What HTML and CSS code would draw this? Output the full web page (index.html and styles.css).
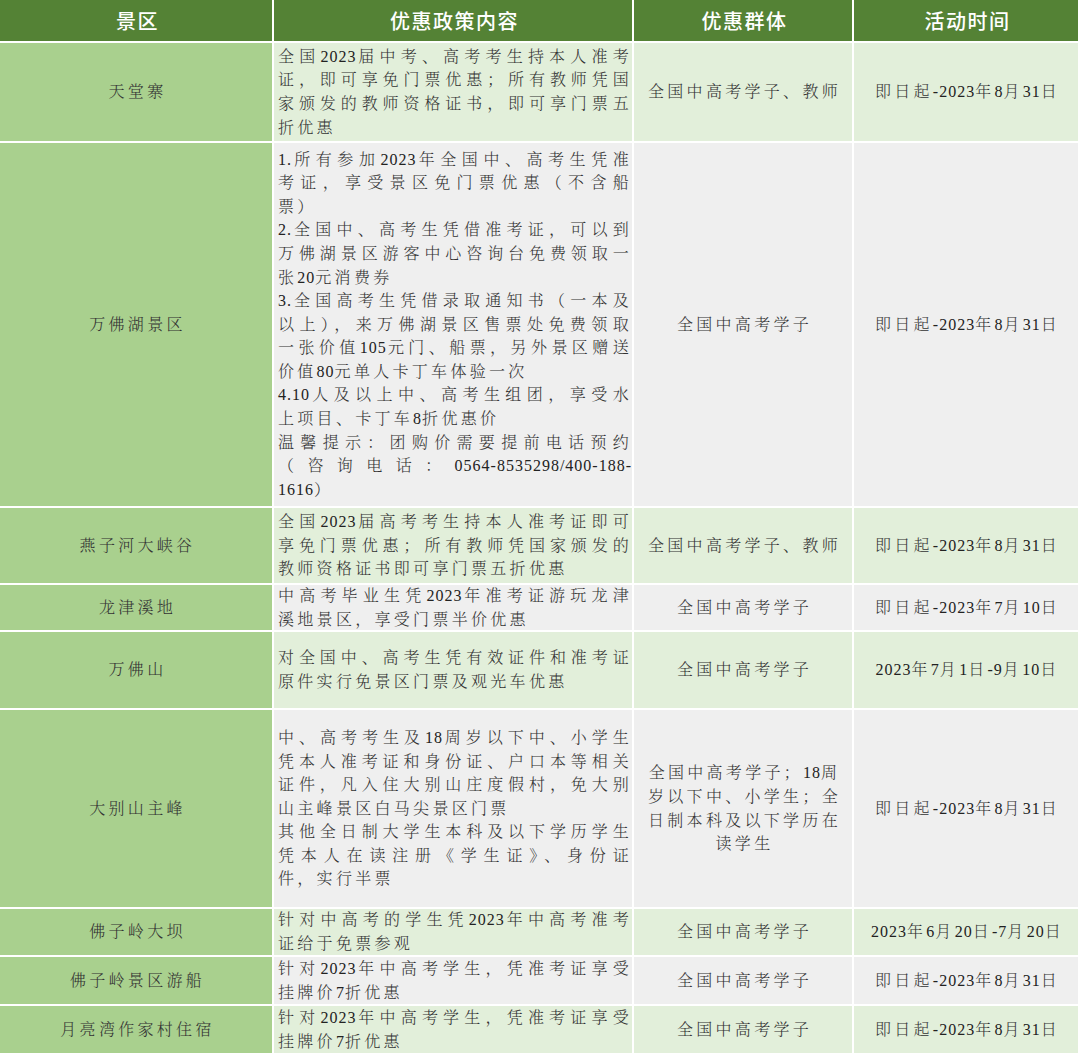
FILE: index.html
```html
<!DOCTYPE html>
<html lang="zh-CN">
<head>
<meta charset="utf-8">
<title>中高考学子优惠政策</title>
<link rel="stylesheet" href="styles.css">
</head>
<body>
<div class="sheet">
  <div class="cell head"><div>景区</div></div>
  <div class="cell head"><div>优惠政策内容</div></div>
  <div class="cell head"><div>优惠群体</div></div>
  <div class="cell head"><div>活动时间</div></div>

  <div class="cell name"><div>天堂寨</div></div>
  <div class="cell policy green"><div class="txt">
    <span class="ln">全国<span class="n">2023</span>届中考、高考考生持本人准考</span>
    <span class="ln">证，即可享免门票优惠；所有教师凭国</span>
    <span class="ln">家颁发的教师资格证书，即可享门票五</span>
    <span class="ln end">折优惠</span>
  </div></div>
  <div class="cell green"><div>全国中高考学子、教师</div></div>
  <div class="cell green"><div>即日起<span class="n">-2023</span>年<span class="n">8</span>月<span class="n">31</span>日</div></div>

  <div class="cell name"><div>万佛湖景区</div></div>
  <div class="cell policy gray"><div class="txt">
    <span class="ln"><span class="n">1.</span>所有参加<span class="n">2023</span>年全国中、高考生凭准</span>
    <span class="ln">考证，享受景区免门票优惠（不含船</span>
    <span class="ln end">票）</span>
    <span class="ln"><span class="n">2.</span>全国中、高考生凭借准考证，可以到</span>
    <span class="ln">万佛湖景区游客中心咨询台免费领取一</span>
    <span class="ln end">张<span class="n">20</span>元消费券</span>
    <span class="ln"><span class="n">3.</span>全国高考生凭借录取通知书（一本及</span>
    <span class="ln">以上），来万佛湖景区售票处免费领取</span>
    <span class="ln">一张价值<span class="n">105</span>元门、船票，另外景区赠送</span>
    <span class="ln end">价值<span class="n">80</span>元单人卡丁车体验一次</span>
    <span class="ln"><span class="n">4.10</span>人及以上中、高考生组团，享受水</span>
    <span class="ln end">上项目、卡丁车<span class="n">8</span>折优惠价</span>
    <span class="ln">温馨提示：团购价需要提前电话预约</span>
    <span class="ln">（咨询电话：<span class="n">0564-8535298/400-188-</span></span>
    <span class="ln end"><span class="n">1616</span>）</span>
  </div></div>
  <div class="cell gray"><div>全国中高考学子</div></div>
  <div class="cell gray"><div>即日起<span class="n">-2023</span>年<span class="n">8</span>月<span class="n">31</span>日</div></div>

  <div class="cell name"><div>燕子河大峡谷</div></div>
  <div class="cell policy green"><div class="txt">
    <span class="ln">全国<span class="n">2023</span>届高考考生持本人准考证即可</span>
    <span class="ln">享免门票优惠；所有教师凭国家颁发的</span>
    <span class="ln end">教师资格证书即可享门票五折优惠</span>
  </div></div>
  <div class="cell green"><div>全国中高考学子、教师</div></div>
  <div class="cell green"><div>即日起<span class="n">-2023</span>年<span class="n">8</span>月<span class="n">31</span>日</div></div>

  <div class="cell name"><div>龙津溪地</div></div>
  <div class="cell policy gray"><div class="txt">
    <span class="ln">中高考毕业生凭<span class="n">2023</span>年准考证游玩龙津</span>
    <span class="ln end">溪地景区，享受门票半价优惠</span>
  </div></div>
  <div class="cell gray"><div>全国中高考学子</div></div>
  <div class="cell gray"><div>即日起<span class="n">-2023</span>年<span class="n">7</span>月<span class="n">10</span>日</div></div>

  <div class="cell name"><div>万佛山</div></div>
  <div class="cell policy green"><div class="txt">
    <span class="ln">对全国中、高考生凭有效证件和准考证</span>
    <span class="ln end">原件实行免景区门票及观光车优惠</span>
  </div></div>
  <div class="cell green"><div>全国中高考学子</div></div>
  <div class="cell green"><div><span class="n">2023</span>年<span class="n">7</span>月<span class="n">1</span>日<span class="n">-9</span>月<span class="n">10</span>日</div></div>

  <div class="cell name"><div>大别山主峰</div></div>
  <div class="cell policy gray"><div class="txt">
    <span class="ln">中、高考考生及<span class="n">18</span>周岁以下中、小学生</span>
    <span class="ln">凭本人准考证和身份证、户口本等相关</span>
    <span class="ln">证件，凡入住大别山庄度假村，免大别</span>
    <span class="ln end">山主峰景区白马尖景区门票</span>
    <span class="ln">其他全日制大学生本科及以下学历学生</span>
    <span class="ln">凭本人在读注册《学生证》、身份证</span>
    <span class="ln end">件，实行半票</span>
  </div></div>
  <div class="cell gray"><div>全国中高考学子；<span class="n">18</span>周<br>岁以下中、小学生；全<br>日制本科及以下学历在<br>读学生</div></div>
  <div class="cell gray"><div>即日起<span class="n">-2023</span>年<span class="n">8</span>月<span class="n">31</span>日</div></div>

  <div class="cell name"><div>佛子岭大坝</div></div>
  <div class="cell policy green"><div class="txt">
    <span class="ln">针对中高考的学生凭<span class="n">2023</span>年中高考准考</span>
    <span class="ln end">证给于免票参观</span>
  </div></div>
  <div class="cell green"><div>全国中高考学子</div></div>
  <div class="cell green"><div><span class="n">2023</span>年<span class="n">6</span>月<span class="n">20</span>日<span class="n">-7</span>月<span class="n">20</span>日</div></div>

  <div class="cell name"><div>佛子岭景区游船</div></div>
  <div class="cell policy gray"><div class="txt">
    <span class="ln">针对<span class="n">2023</span>年中高考学生，凭准考证享受</span>
    <span class="ln end">挂牌价<span class="n">7</span>折优惠</span>
  </div></div>
  <div class="cell gray"><div>全国中高考学子</div></div>
  <div class="cell gray"><div>即日起<span class="n">-2023</span>年<span class="n">8</span>月<span class="n">31</span>日</div></div>

  <div class="cell name"><div>月亮湾作家村住宿</div></div>
  <div class="cell policy green"><div class="txt">
    <span class="ln">针对<span class="n">2023</span>年中高考学生，凭准考证享受</span>
    <span class="ln end">挂牌价<span class="n">7</span>折优惠</span>
  </div></div>
  <div class="cell green"><div>全国中高考学子</div></div>
  <div class="cell green"><div>即日起<span class="n">-2023</span>年<span class="n">8</span>月<span class="n">31</span>日</div></div>
</div>
</body>
</html>
```

FILE: styles.css
```css
html, body {
  margin: 0;
  padding: 0;
  background: #ffffff;
}

.sheet {
  display: grid;
  grid-template-columns: 272px 358px 218px 224px;
  grid-template-rows: 41px 98px 363px 75px 45px 76px 197px 46px 47px 47px;
  gap: 2px;
  width: 1078px;
  background: #ffffff;
  font-family: "Liberation Serif", "Noto Serif CJK SC", "Noto Sans CJK SC", serif;
  font-size: 16px;
  font-weight: 300;
  line-height: 23.6px;
  color: #333333;
}

.cell {
  display: flex;
  align-items: center;
  justify-content: center;
  text-align: center;
  letter-spacing: 3.3px;
  padding-left: 3px;
  overflow: hidden;
}

.head {
  background: #548235;
  color: #ffffff;
  font-family: "Noto Sans CJK SC", sans-serif;
  font-size: 20px;
  font-weight: 500;
  letter-spacing: 1.5px;
}

.name {
  background: #a9d08e;
}

.green {
  background: #e2efda;
}

.gray {
  background: #efefef;
}

.policy {
  justify-content: flex-start;
  text-align: justify;
  padding: 0 0 0 4px;
}

.txt {
  width: 100%;
}

.ln {
  display: block;
  text-align: justify;
  text-align-last: justify;
}

.ln.end {
  text-align-last: left;
}

.n {
  letter-spacing: 1px;
  font-weight: 400;
  color: #222222;
}
```
